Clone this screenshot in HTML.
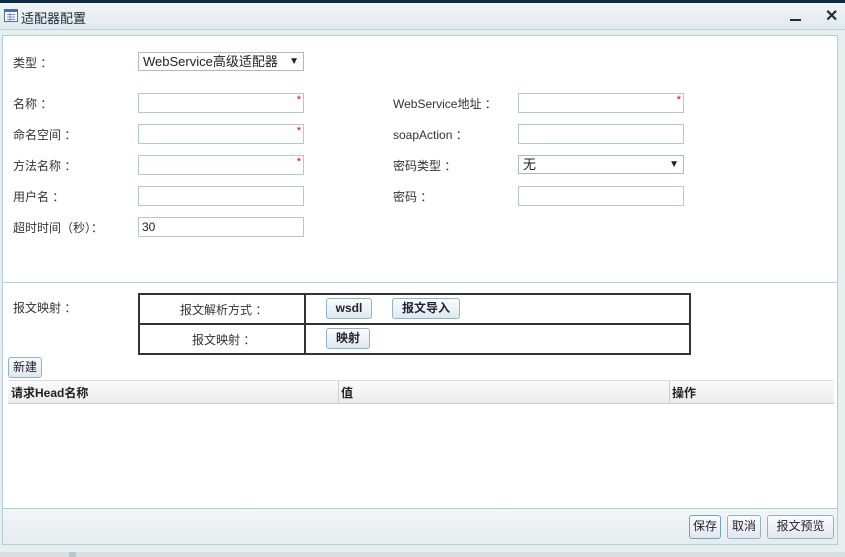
<!DOCTYPE html>
<html><head><meta charset="utf-8"><style>
*{margin:0;padding:0;box-sizing:border-box}
body{width:845px;height:557px;overflow:hidden;background:#e6eef0;font-family:"Liberation Sans","Noto Sans CJK SC",sans-serif;font-size:12px;color:#222;position:relative}
.a{position:absolute}
.lbl{position:absolute;font-size:12px;color:#333}
.in{position:absolute;height:20px;width:166px;border:1px solid #b3c8d0;background:#fff;font-size:12px;padding:0 3px;line-height:18px}
.star{position:absolute;right:2px;top:-3px;color:#e00;font-size:11px}
.btn{position:absolute;height:21px;border:1px solid #8fb3c7;border-radius:3px;background:linear-gradient(#fbfcfd,#dfe8ee);font-size:12px;font-weight:bold;color:#223;text-align:center;line-height:18px}
.sel{position:absolute;width:166px;height:19px;border:1px solid #a9bcc6;font-size:13px;padding:0 4px;line-height:17px;background:#fff}
.sel span{position:absolute;right:4px;top:0;font-size:10px;line-height:17px}
</style></head><body>
<div class="a" style="left:0;top:0;width:845px;height:3px;background:#0f2a45"></div>
<div class="a" style="left:0;top:3px;width:845px;height:27px;background:linear-gradient(#f1f5f6,#e1e9ec);border-bottom:1px solid #b9cfd6"></div>
<svg class="a" style="left:4px;top:9px" width="14" height="13"><rect x="0.5" y="0.5" width="13" height="12" fill="#fff" stroke="#4a6fa5"/><rect x="1" y="1" width="12" height="2" fill="#4a6fa5"/><path d="M3 5.5h8M3 8h8M3 10.5h8M6 4v8" stroke="#6d8fbf"/></svg>
<div class="a" style="left:21px;top:8px;font-size:13px;color:#1a2a3a">适配器配置</div>
<div class="a" style="left:790px;top:19px;width:11px;height:2px;background:#1c2f45"></div>
<div class="a" style="left:825px;top:6px;font-size:16px;font-weight:bold;color:#1c2f45">✕</div>
<div class="a" style="left:2px;top:35px;width:836px;height:510px;background:#fff;border:1px solid #b3ced6"></div>
<div class="a" style="left:3px;top:282px;width:834px;height:1px;background:#b3ced6"></div>
<div class="lbl" style="left:13px;top:54px">类型 ：</div>
<div class="sel" style="left:138px;top:52px">WebService高级适配器<span>▼</span></div>
<div class="lbl" style="left:13px;top:95px">名称 ：</div>
<div class="in" style="left:138px;top:93px"><span class="star">*</span></div>
<div class="lbl" style="left:393px;top:95px">WebService地址 ：</div>
<div class="in" style="left:518px;top:93px"><span class="star">*</span></div>
<div class="lbl" style="left:13px;top:126px">命名空间 ：</div>
<div class="in" style="left:138px;top:124px"><span class="star">*</span></div>
<div class="lbl" style="left:393px;top:126px">soapAction ：</div>
<div class="in" style="left:518px;top:124px"></div>
<div class="lbl" style="left:13px;top:157px">方法名称 ：</div>
<div class="in" style="left:138px;top:155px"><span class="star">*</span></div>
<div class="lbl" style="left:393px;top:157px">密码类型 ：</div>
<div class="sel" style="left:518px;top:155px">无<span>▼</span></div>
<div class="lbl" style="left:13px;top:188px">用户名 ：</div>
<div class="in" style="left:138px;top:186px"></div>
<div class="lbl" style="left:393px;top:188px">密码 ：</div>
<div class="in" style="left:518px;top:186px"></div>
<div class="lbl" style="left:13px;top:219px">超时时间（秒）：</div>
<div class="in" style="left:138px;top:217px">30</div>
<div class="lbl" style="left:13px;top:299px">报文映射 ：</div>
<div class="a" style="left:138px;top:293px;width:553px;height:62px;border:2px solid #333"></div>
<div class="a" style="left:140px;top:323px;width:549px;height:2px;background:#333"></div>
<div class="a" style="left:304px;top:295px;width:2px;height:58px;background:#333"></div>
<div class="lbl" style="left:180px;top:301px">报文解析方式 ：</div>
<div class="lbl" style="left:192px;top:331px">报文映射 ：</div>
<div class="btn" style="left:326px;top:298px;width:46px">wsdl</div>
<div class="btn" style="left:392px;top:298px;width:68px">报文导入</div>
<div class="btn" style="left:326px;top:328px;width:44px">映射</div>
<div class="btn" style="left:8px;top:357px;width:34px;font-weight:normal">新建</div>
<div class="a" style="left:8px;top:380px;width:826px;height:24px;background:linear-gradient(#fafafa,#ececec);border-top:1px solid #ddd;border-bottom:1px solid #ccc;font-weight:bold;font-size:12px">
<span class="a" style="left:3px;top:3px">请求Head名称</span>
<span class="a" style="left:330px;top:0;width:1px;height:23px;background:#ccc"></span>
<span class="a" style="left:333px;top:3px">值</span>
<span class="a" style="left:661px;top:0;width:1px;height:23px;background:#ccc"></span>
<span class="a" style="left:664px;top:3px">操作</span>
</div>
<div class="a" style="left:3px;top:508px;width:834px;height:36px;background:linear-gradient(#f2f5f6,#e6ecee);border-top:1px solid #b3ced6"></div>
<div class="btn" style="left:689px;top:515px;width:32px;height:24px;line-height:21px;font-weight:normal;border-color:#6fa3c0">保存</div>
<div class="btn" style="left:727px;top:515px;width:34px;height:24px;line-height:21px;font-weight:normal">取消</div>
<div class="btn" style="left:767px;top:515px;width:67px;height:24px;line-height:21px;font-weight:normal">报文预览</div>
<div class="a" style="left:0;top:552px;width:845px;height:5px;background:#d9dee0"></div>
<div class="a" style="left:69px;top:552px;width:7px;height:5px;background:#b9c6cc"></div>
</body></html>
